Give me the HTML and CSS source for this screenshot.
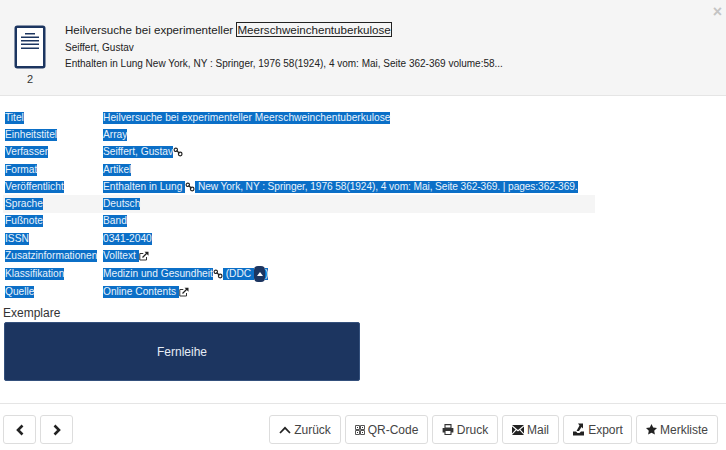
FILE: index.html
```html
<!DOCTYPE html>
<html lang="de">
<head>
<meta charset="utf-8">
<title>Heilversuche</title>
<link rel="stylesheet" href="styles.css">
</head>
<body>
<header class="head">
  <div class="thumb">
    <svg class="doc" width="32" height="44" viewBox="0 0 32 44"><rect x="1.750" y="1.750" width="28.500" height="40.500" rx="1.500" fill="#fff" stroke="#1c3560" stroke-width="2.500"/><path d="M11 8.700h10M7 12.300h18M7 15.700h18M7 19.300h18M7 23.300h18" stroke="#1c3560" stroke-width="1.500" fill="none"/></svg>
    <div class="count">2</div>
  </div>
  <div class="meta">
    <div class="h-title">Heilversuche bei experimenteller <span class="focus">Meerschweinchentuberkulose</span></div>
    <div class="h-line">Seiffert, Gustav</div>
    <div class="h-line">Enthalten in Lung New York, NY : Springer, 1976 58(1924), 4 vom: Mai, Seite 362-369 volume:58...</div>
  </div>
  <span class="close">×</span>
</header>

<main class="details">
  <div class="row"><div class="k"><span class="sel">Titel</span></div><div class="v"><span class="sel wide">Heilversuche bei experimenteller Meerschweinchentuberkulose</span></div></div>
  <div class="row"><div class="k"><span class="sel">Einheitstitel</span></div><div class="v"><span class="sel">Array</span></div></div>
  <div class="row"><div class="k"><span class="sel">Verfasser</span></div><div class="v"><span class="sel">Seiffert, Gustav</span><svg class="ic" width="10" height="10" viewBox="0 0 10 10"><use href="#link"/></svg></div></div>
  <div class="row"><div class="k"><span class="sel">Format</span></div><div class="v"><span class="sel">Artikel</span></div></div>
  <div class="row"><div class="k"><span class="sel">Veröffentlicht</span></div><div class="v"><span class="sel">Enthalten in Lung </span><svg class="ic" width="10" height="10" viewBox="0 0 10 10"><use href="#link"/></svg><span class="sel narrow"> New York, NY : Springer, 1976 58(1924), 4 vom: Mai, Seite 362-369. | pages:362-369.</span></div></div>
  <div class="row alt"><div class="k"><span class="sel">Sprache</span></div><div class="v"><span class="sel">Deutsch</span></div></div>
  <div class="row"><div class="k"><span class="sel">Fußnote</span></div><div class="v"><span class="sel">Band</span></div></div>
  <div class="row"><div class="k"><span class="sel">ISSN</span></div><div class="v"><span class="sel">0341-2040</span></div></div>
  <div class="row"><div class="k"><span class="sel">Zusatzinformationen</span></div><div class="v"><span class="sel">Volltext </span><svg class="ic" width="10" height="10" viewBox="0 0 10 10"><use href="#ext"/></svg></div></div>
  <div class="row tall"><div class="k"><span class="sel">Klassifikation</span></div><div class="v"><span class="sel">Medizin und Gesundheit</span><svg class="ic" width="10" height="10" viewBox="0 0 10 10"><use href="#link"/></svg><span class="sel"> (DDC </span><span class="pill"><svg width="6" height="4" viewBox="0 0 6 4"><path d="M3 0l3 4H0z" fill="#fff"/></svg></span><span class="sel">)</span></div></div>
  <div class="row"><div class="k"><span class="sel">Quelle</span></div><div class="v"><span class="sel">Online Contents </span><svg class="ic" width="10" height="10" viewBox="0 0 10 10"><use href="#ext"/></svg></div></div>
  <div class="ex-label">Exemplare</div>
  <div class="ex-btn">Fernleihe</div>
</main>

<footer class="foot">
  <div class="group">
    <a class="btn nav"><svg width="10" height="12" viewBox="0 0 10 12"><path d="M7.500 1.500L3 6l4.500 4.500" fill="none" stroke="#222" stroke-width="2.600"/></svg></a>
    <a class="btn nav"><svg width="10" height="12" viewBox="0 0 10 12"><path d="M2.500 1.500L7 6l-4.500 4.500" fill="none" stroke="#222" stroke-width="2.600"/></svg></a>
  </div>
  <div class="group">
    <a class="btn b-back"><svg width="12" height="8" viewBox="0 0 12 8"><path d="M1 7L6 1.800 11 7" fill="none" stroke="#222" stroke-width="1.700"/></svg>Zurück</a>
    <a class="btn b-qr"><svg width="10" height="10" viewBox="0 0 10 10"><path d="M.5.500h4v4h-4zM5.500.500h4v4h-4zM.5 5.500h4v4h-4zM5.500 5.500h4v4h-4z" fill="none" stroke="#555" stroke-width="1"/><path d="M2 2h1v1H2zM7 2h1v1H7zM2 7h1v1H2zM7 7h1v1H7z" fill="#333"/></svg>QR-Code</a>
    <a class="btn b-print"><svg width="12" height="11" viewBox="0 0 12 11"><path d="M3 .6h6v3.400H3z" fill="#fff" stroke="#333" stroke-width="1.100"/><path d="M.6 4h10.800v4.500H.6z" fill="#333"/><path d="M3 6.500h6v4H3z" fill="#fff" stroke="#333" stroke-width="1.100"/></svg>Druck</a>
    <a class="btn b-mail"><svg width="12" height="10" viewBox="0 0 12 10"><path d="M0 0h12L6 5zM0 1.500L3.600 4.600 0 8.500zM12 1.500L8.400 4.600 12 8.500zM4.400 5.300L6 6.600l1.600-1.300L12 10H0z" fill="#222"/></svg>Mail</a>
    <a class="btn b-export"><svg width="13" height="13" viewBox="0 0 13 13"><path d="M1 8.500h3l1.500 1.500h2L9 8.500h3v4H1z" fill="#222"/><path d="M6 .5h5v5L9.500 4 7 8H4.500L7.500 2.500z" fill="#222"/></svg>Export</a>
    <a class="btn b-star"><svg width="11" height="11" viewBox="0 0 11 11"><path d="M5.500 0l1.700 3.500 3.800.5-2.800 2.700.7 3.800-3.400-1.800-3.400 1.800.7-3.800L0 4l3.800-.5z" fill="#222"/></svg>Merkliste</a>
  </div>
</footer>

<svg class="defs" width="0" height="0">
  <symbol id="link" viewBox="0 0 10 10"><circle cx="2.800" cy="2.800" r="1.700" fill="none" stroke="#222" stroke-width="1.100"/><circle cx="7.200" cy="7" r="1.800" fill="none" stroke="#222" stroke-width="1.200"/><path d="M3.500 3.500l3 2.800" stroke="#222" stroke-width="1.200"/></symbol>
  <symbol id="ext" viewBox="0 0 10 10"><path d="M7.500 6v3H.8V2.500h3.500" fill="none" stroke="#333" stroke-width="1"/><path d="M3.500 6.500L8 2" stroke="#222" stroke-width="1.300"/><path d="M5.500.8h4v4z" fill="#222"/></symbol>
</svg>
</body>
</html>
```

FILE: styles.css
```css
* { box-sizing: border-box; }
html, body { margin: 0; padding: 0; }
body {
  width: 726px;
  height: 450px;
  overflow: hidden;
  background: #fff;
  color: #333;
  font-family: "Liberation Sans", Arial, sans-serif;
  display: flex;
  flex-direction: column;
}
.head {
  height: 96px;
  background: #f5f5f5;
  border-bottom: 1px solid #e5e5e5;
  display: flex;
  padding: 25px 0 0 14px;
  position: relative;
}
.thumb { width: 32px; display: flex; flex-direction: column; align-items: center; }
.doc { display: block; }
.count { font-size: 11px; line-height: 13px; margin-top: 4px; color: #333; }
.meta { margin-left: 19px; color: #222; }
.h-title { font-size: 11.600px; line-height: 16px; margin-top: -3px; }
.focus { border: 1px solid #222; padding: 0; }
.h-line { font-size: 10px; line-height: 13px; margin-top: 3px; }
.h-title + .h-line { margin-top: 2.500px; }
.close {
  position: absolute;
  right: 4px;
  top: 3px;
  font-size: 16px;
  line-height: 18px;
  font-weight: bold;
  color: #c4c4c4;
}
.details { padding: 13px 0 0 3px; flex: 1; }
.row {
  display: grid;
  grid-template-columns: 98px 1fr;
  width: 592px;
  height: 17.300px;
  align-items: center;
  font-size: 10.200px;
  line-height: 12px;
  padding-left: 2px;
}
.row.alt { background: #f5f5f5; }
.row.tall { height: 18.300px; }
.k, .v { white-space: pre; display: flex; align-items: center; }
.sel { background: #0b6fc7; color: #e8f2fb; }
.wide { letter-spacing: 0.035px; }
.narrow { letter-spacing: -0.095px; }
.ic { display: block; flex: none; }
.pill {
  flex: none;
  width: 11px;
  height: 16px;
  border-radius: 4px;
  background: #1c3560;
  display: flex;
  align-items: center;
  justify-content: center;
}
.ex-label { font-size: 12px; line-height: 14px; margin-top: 6px; color: #333; }
.ex-btn {
  width: 356px;
  height: 59px;
  margin: 2px 0 0 1px;
  background: #1c3560;
  border: 1px solid #34507c;
  border-radius: 2px;
  color: #e6ecf5;
  font-size: 12px;
  display: flex;
  align-items: center;
  justify-content: center;
}
.foot {
  height: 47px;
  border-top: 1px solid #e5e5e5;
  padding: 11px 8px 0 3px;
  display: flex;
  justify-content: space-between;
  align-items: flex-start;
}
.group { display: flex; gap: 4px; }
.btn {
  height: 29px;
  border: 1px solid #ddd;
  border-radius: 3px;
  background: #fff;
  color: #444;
  font-size: 12px;
  display: flex;
  align-items: center;
  justify-content: center;
  gap: 3px;
}
.nav { width: 33px; }
.b-back { width: 72px; }
.b-qr { width: 83px; }
.b-print { width: 66px; }
.b-mail { width: 57px; }
.b-export { width: 69px; }
.b-star { width: 82px; }
.defs { position: absolute; }
```
